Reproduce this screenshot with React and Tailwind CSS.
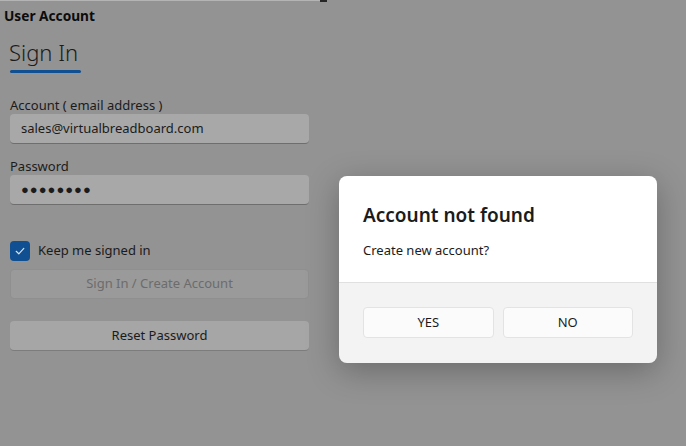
import React, { useState } from 'react';

const font = { fontFamily: '"Noto Sans", "Open Sans", Arial, sans-serif' };

const Field = ({ label, children }) => (
  <div className="flex flex-col">
    <label className="text-[13px] leading-[17px] text-[#1b1b1b]">{label}</label>
    <div className="h-[30px] w-[299px] rounded-[4px] bg-[#a8a8a8] border-b border-[#6e6e6e] flex items-center px-[11px] text-[13px] text-[#1b1b1b]">
      {children}
    </div>
  </div>
);

const App = () => {
  const [keep, setKeep] = useState(true);

  return (
    <div className="relative w-[686px] h-[446px] bg-[#939393] overflow-hidden" style={font}>
      {/* window top edge */}
      <div className="flex items-start h-[2px]">
        <div className="w-[320px] h-px bg-[#b4b4b4]" />
        <div className="w-[7px] h-[2px] bg-[#262626]" />
      </div>

      <div className="px-[4px] pt-[6px] text-[13.7px] font-bold leading-[16px] text-[#0c0c0c]">User Account</div>

      <div className="px-[10px]">
        <div className="mt-[14px] inline-flex flex-col">
          <span className="text-[22px] font-light leading-[28px] text-[#1b1b1b] -ml-[1px]">Sign In</span>
          <span className="mt-[4px] h-[3px] w-[71px] rounded-full bg-[#0f4f92]" />
        </div>

        <div className="mt-[24px] flex flex-col gap-[14px]">
          <Field label="Account ( email address )">sales@virtualbreadboard.com</Field>
          <Field label="Password">
            <span className="tracking-[1px] text-[13px]">●●●●●●●●</span>
          </Field>
        </div>

        <label className="mt-[36px] flex items-center gap-[8px] cursor-pointer">
          <span
            onClick={() => setKeep(!keep)}
            className={`w-[20px] h-[20px] rounded-[4px] flex items-center justify-center ${keep ? 'bg-[#0f4f92]' : 'border border-[#555]'}`}
          >
            {keep && (
              <svg width="12" height="12" viewBox="0 0 12 12" fill="none">
                <path d="M2.2 6.3 L4.8 8.8 L9.8 3.4" stroke="#d8e4f0" strokeWidth="1.2" strokeLinecap="round" strokeLinejoin="round" />
              </svg>
            )}
          </span>
          <span className="text-[13px] text-[#1b1b1b]">Keep me signed in</span>
        </label>

        <button disabled className="block mt-[8px] w-[299px] h-[30px] rounded-[4px] bg-[#9a9a9a] border border-[#8f8f8f] text-[13px] text-[#6c6c6c]">
          Sign In / Create Account
        </button>

        <button className="block mt-[22px] w-[299px] h-[30px] rounded-[4px] bg-[#a6a6a6] border-b border-[#7c7c7c] text-[13px] text-[#1b1b1b]">
          Reset Password
        </button>
      </div>

      {/* dialog */}
      <div className="absolute left-[339px] top-[176px] w-[318px] rounded-[8px] overflow-hidden shadow-[0_8px_32px_rgba(0,0,0,0.28)]">
        <div className="bg-white px-[24px] pt-[27px] pb-[23px] border-b border-[#e0e0e0]">
          <h2 className="text-[19px] font-semibold leading-[24px] text-[#1b1b1b]">Account not found</h2>
          <p className="mt-[14px] text-[13px] leading-[18px] text-[#1b1b1b]">Create new account?</p>
        </div>
        <div className="bg-[#f3f3f3] px-[24px] pt-[24px] pb-[25px] flex gap-[9px]">
          <button className="flex-1 h-[31px] rounded-[4px] bg-[#fbfbfb] border border-[#e3e3e3] text-[13px] text-[#1b1b1b]">YES</button>
          <button className="flex-1 h-[31px] rounded-[4px] bg-[#fbfbfb] border border-[#e3e3e3] text-[13px] text-[#1b1b1b]">NO</button>
        </div>
      </div>
    </div>
  );
};

export default App;
